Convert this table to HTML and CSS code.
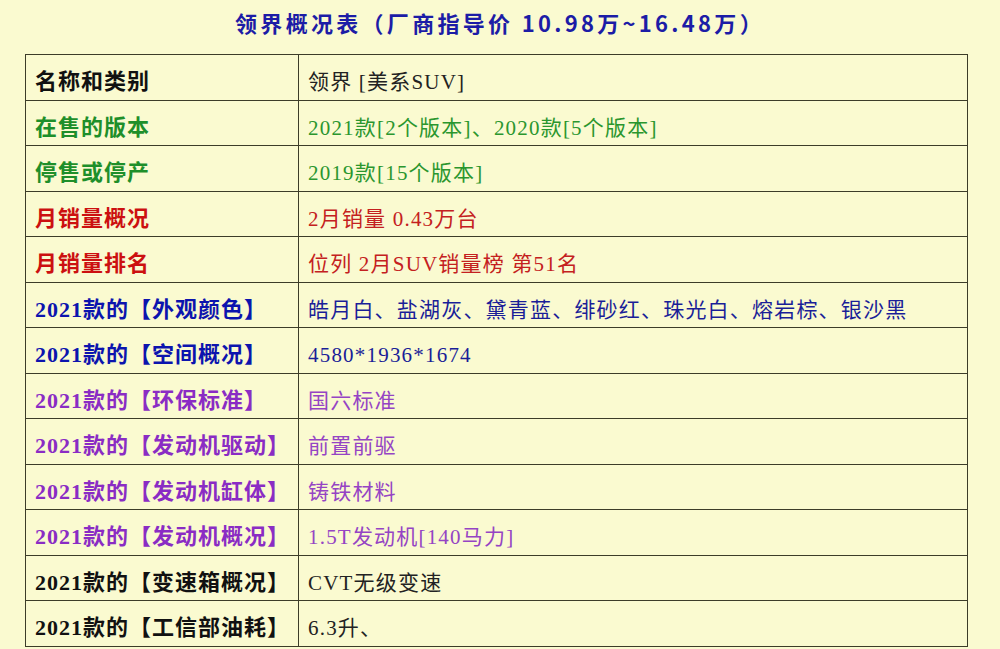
FILE: index.html
```html
<!DOCTYPE html>
<html lang="zh-CN">
<head>
<meta charset="utf-8">
<title>领界概况表</title>
<link rel="stylesheet" href="styles.css">
</head>
<body>
<h1 class="title">领界概况表（厂商指导价 10.98万~16.48万）</h1>
<table class="spec">
  <tr class="c-black"><th>名称和类别</th><td>领界 [美系SUV]</td></tr>
  <tr class="c-green"><th>在售的版本</th><td>2021款[2个版本]、2020款[5个版本]</td></tr>
  <tr class="c-green"><th>停售或停产</th><td>2019款[15个版本]</td></tr>
  <tr class="c-red"><th>月销量概况</th><td>2月销量 0.43万台</td></tr>
  <tr class="c-red"><th>月销量排名</th><td>位列 2月SUV销量榜 第51名</td></tr>
  <tr class="c-blue"><th>2021款的【外观颜色】</th><td>皓月白、盐湖灰、黛青蓝、绯砂红、珠光白、熔岩棕、银沙黑</td></tr>
  <tr class="c-blue"><th>2021款的【空间概况】</th><td>4580*1936*1674</td></tr>
  <tr class="c-purple"><th>2021款的【环保标准】</th><td>国六标准</td></tr>
  <tr class="c-purple"><th>2021款的【发动机驱动】</th><td>前置前驱</td></tr>
  <tr class="c-purple"><th>2021款的【发动机缸体】</th><td>铸铁材料</td></tr>
  <tr class="c-purple"><th>2021款的【发动机概况】</th><td>1.5T发动机[140马力]</td></tr>
  <tr class="c-black"><th>2021款的【变速箱概况】</th><td>CVT无级变速</td></tr>
  <tr class="c-black"><th>2021款的【工信部油耗】</th><td>6.3升、</td></tr>
</table>
</body>
</html>
```

FILE: styles.css
```css
html, body {
  margin: 0;
  padding: 0;
  background: #fafad0;
}
body {
  font-family: "Liberation Serif", "Noto Sans CJK SC", serif;
  overflow: hidden;
}
.title {
  margin: 0;
  height: 54px;
  display: flex;
  align-items: center;
  justify-content: center;
  padding-bottom: 10px;
  box-sizing: border-box;
  font-family: "Noto Sans CJK SC", sans-serif;
  font-size: 22px;
  font-weight: 700;
  letter-spacing: 3.3px;
  color: #1c1ca6;
}
.spec {
  margin-left: 25px;
  width: 943px;
  border-collapse: collapse;
  border: 1px solid #3c3c28;
}
.spec th, .spec td {
  border: 1px solid #3c3c28;
  height: 45.5px;
  box-sizing: border-box;
  padding: 10px 0 0 9px;
  text-align: left;
  vertical-align: middle;
  line-height: 24px;
  white-space: nowrap;
}
.spec th {
  width: 273px;
  font-size: 22px;
  font-weight: 700;
  letter-spacing: 1px;
}
.spec td {
  font-size: 21px;
  font-weight: 400;
  letter-spacing: 1.2px;
}
.c-black th { color: #111; }
.c-black td { color: #222; }
.c-green th { color: #1e8f2a; }
.c-green td { color: #2a962e; }
.c-red th { color: #cc1010; }
.c-red td { color: #c42020; }
.c-blue th { color: #0c14ae; }
.c-blue td { color: #1a1e98; }
.c-purple th { color: #8a2cc4; }
.c-purple td { color: #9544c4; }
```
